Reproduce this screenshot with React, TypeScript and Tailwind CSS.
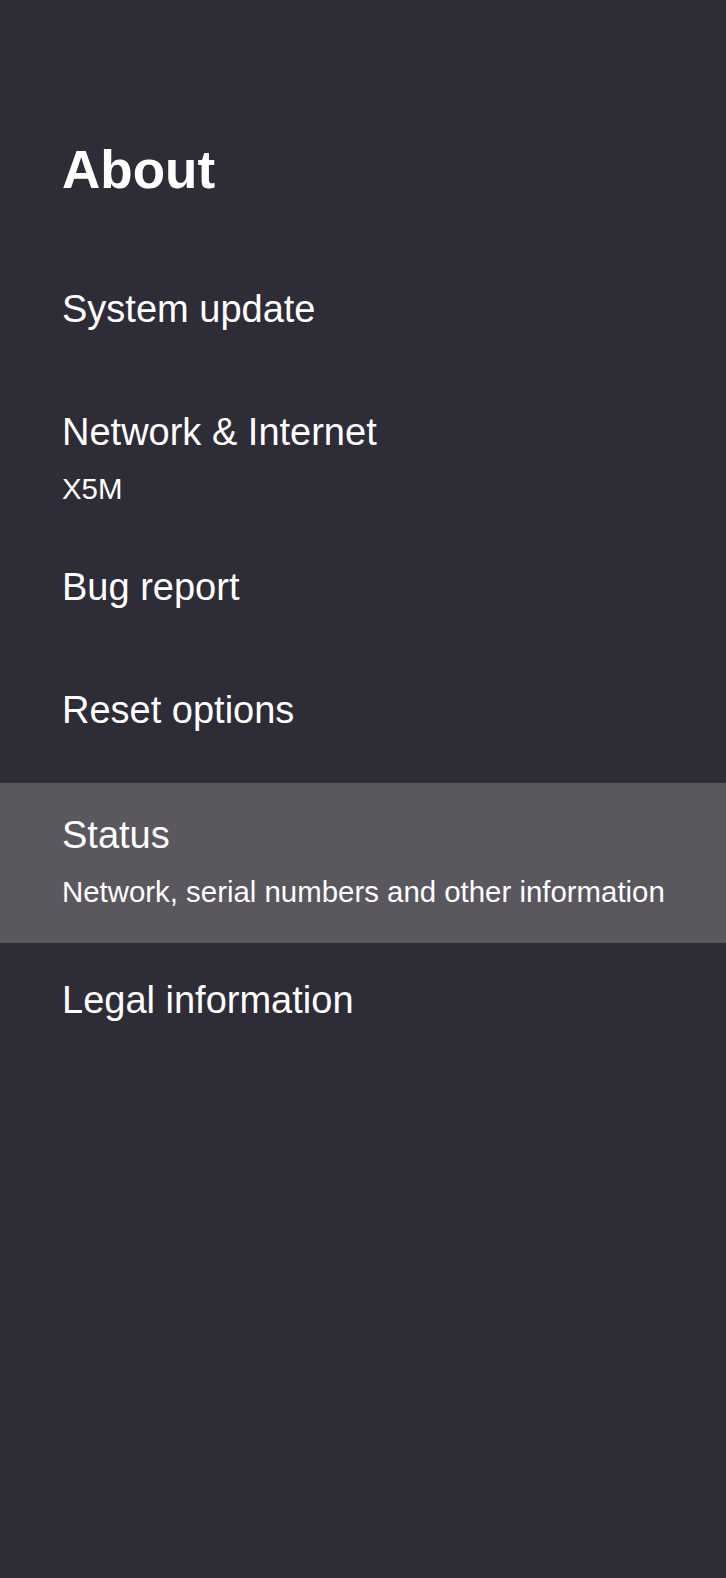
const font = { fontFamily: '"Liberation Sans", Arial, sans-serif' };

interface Row {
  title: string;
  subtitle?: string;
  focused?: boolean;
  pad: string;
}

const rows: Row[] = [
  { title: "System update", pad: "pt-[30px] pb-[49px]" },
  { title: "Network & Internet", subtitle: "X5M", pad: "pt-[30px] pb-[28px]" },
  { title: "Bug report", pad: "pt-[30px] pb-[49px]" },
  { title: "Reset options", pad: "pt-[30px] pb-[51px]" },
  {
    title: "Status",
    subtitle: "Network, serial numbers and other information",
    focused: true,
    pad: "pt-[30px] pb-[33px]",
  },
  { title: "Legal information", pad: "pt-[35px] pb-[49px]" },
];

export default function App() {
  return (
    <div className="w-full min-h-[1578px] bg-[#2e2c36] text-white pt-[140px]" style={font}>
      {/* Header */}
      <h1 className="px-[62px] text-[53px] leading-[60px] font-bold">About</h1>

      {/* Settings list */}
      <div className="mt-[57px] flex flex-col">
        {rows.map((row) => (
          <div
            key={row.title}
            className={`px-[62px] ${row.pad} ${row.focused ? "bg-[#5a575f]" : ""}`}
          >
            <div className="text-[38px] leading-[44px] whitespace-nowrap">{row.title}</div>
            {row.subtitle && (
              <div className="mt-[17px] text-[29.4px] leading-[36px] whitespace-nowrap">
                {row.subtitle}
              </div>
            )}
          </div>
        ))}
      </div>
    </div>
  );
}
